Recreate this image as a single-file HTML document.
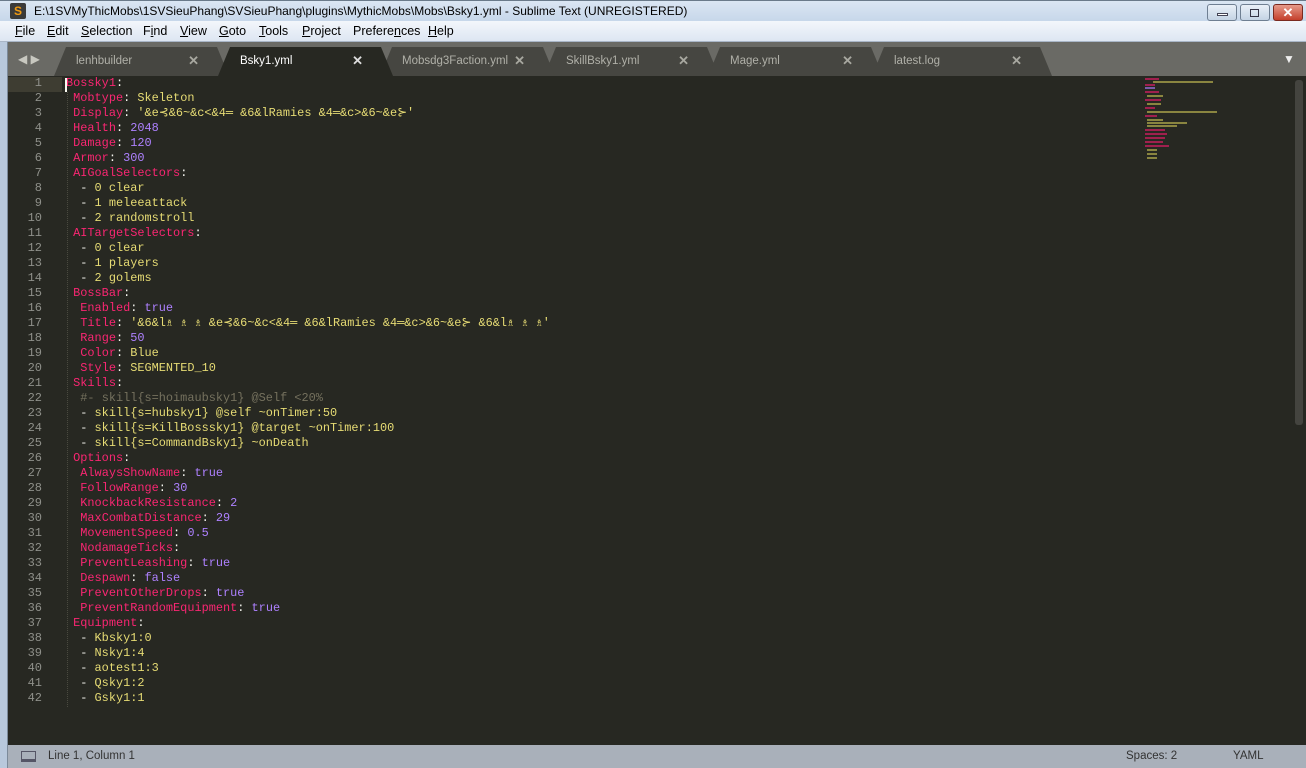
<!DOCTYPE html>
<html><head><meta charset="utf-8"><style>
*{margin:0;padding:0;box-sizing:border-box}
body{width:1306px;height:768px;overflow:hidden;background:#272822;position:relative;font-family:"Liberation Sans",sans-serif}
#title{position:absolute;left:0;top:0;width:1306px;height:21px;background:linear-gradient(#dbe6f3,#c7d7ea);border-top:1px solid #6a7a8a}
#title .t{position:absolute;left:34px;top:3px;font-size:12px;color:#000}
#icon{position:absolute;left:10px;top:2px;width:16px;height:16px;background:#3a3a3a;border-radius:2px;color:#f39c12;font-weight:bold;font-size:12px;text-align:center;line-height:16px}
.wb{position:absolute;top:3px;height:17px;border:1px solid #6f7f92;border-radius:3px;background:linear-gradient(#e9f0f8,#c4d3e4)}
#menu{position:absolute;left:0;top:21px;width:1306px;height:21px;background:linear-gradient(#f3f6fb,#dde6f2);border-bottom:1px solid #a9b6c7}
#menu span{position:absolute;top:3px;font-size:12.5px;color:#000}
#leftedge{position:absolute;left:0;top:42px;width:8px;height:726px;background:#b8c8dc;border-right:1px solid #7c8a9a}
#tabs{position:absolute;left:8px;top:42px;width:1298px;height:34px;background:#6a6a65}
.tab{position:absolute;top:5px;height:29px;background:#464641;clip-path:polygon(0 100%,12px 0,calc(100% - 12px) 0,100% 100%)}
.tab.a{background:#272822}
.tab span{position:absolute;top:8px;left:22px;font-size:11.5px;color:#b0b0a8}
.tab.a span{color:#fff}
.tab i{position:absolute;top:6px;right:30px;font-style:normal;font-size:13px;color:#a8a8a0;font-weight:bold}
#gut{position:absolute;left:8px;top:76px;width:34px;font-family:"Liberation Mono",monospace;font-size:12px;line-height:15px;color:#8f908a;text-align:right}
#hl{position:absolute;left:8px;top:77px;width:54px;height:15px;background:#3e3d32}
#code{position:absolute;left:66px;top:76px;font-family:"Liberation Mono","DejaVu Sans Mono",monospace;font-size:11.9px;line-height:15px;color:#f8f8f2;white-space:pre}
#guide{position:absolute;left:67px;top:92px;height:615px;border-left:1px dotted #4a4a40}
.k{color:#f92672}.s{color:#e6db74}.n{color:#ae81ff}.c{color:#75715e}
#caret{position:absolute;left:65px;top:78px;width:2px;height:14px;background:#f8f8f0}
#status{position:absolute;left:8px;top:745px;width:1298px;height:23px;background:#a9b0ba;font-size:11.5px;color:#333}
#status span{position:absolute;top:5px}
#scroll{position:absolute;left:1295px;top:80px;width:8px;height:345px;background:#44443f;border-radius:3px}
#mini{position:absolute;left:1145px;top:78px;width:80px;height:90px}
#mini div{position:absolute;height:2px}
</style></head><body>
<div id="title"><div id="icon">S</div><div class="t">E:\1SVMyThicMobs\1SVSieuPhang\SVSieuPhang\plugins\MythicMobs\Mobs\Bsky1.yml - Sublime Text (UNREGISTERED)</div>
<div class="wb" style="left:1207px;width:30px"><div style="position:absolute;left:9px;top:8px;width:11px;height:3px;background:#fff;border:1px solid #445"></div></div>
<div class="wb" style="left:1240px;width:30px"><div style="position:absolute;left:9px;top:4px;width:9px;height:8px;border:1px solid #334"></div></div>
<div class="wb" style="left:1273px;width:30px;background:linear-gradient(#e69a8a,#c4402c);border-color:#7a2a20;color:#fff;text-align:center;font-weight:bold;font-size:13px;line-height:15px">✕</div></div>
<div id="menu"><span style="left:15px"><u>F</u>ile</span><span style="left:47px"><u>E</u>dit</span><span style="left:81px"><u>S</u>election</span><span style="left:143px">F<u>i</u>nd</span><span style="left:180px"><u>V</u>iew</span><span style="left:219px"><u>G</u>oto</span><span style="left:259px"><u>T</u>ools</span><span style="left:302px"><u>P</u>roject</span><span style="left:353px">Prefere<u>n</u>ces</span><span style="left:428px"><u>H</u>elp</span></div>
<div id="leftedge"></div>
<div id="tabs">
<div style="position:absolute;left:10px;top:10px;color:#c8c8c0;font-size:12px">◀ ▶</div>
<div class="tab" style="left:46px;width:175px"><span>lenhbuilder</span><i>✕</i></div>
<div class="tab" style="left:536px;width:175px"><span>SkillBsky1.yml</span><i>✕</i></div>
<div class="tab" style="left:700px;width:175px"><span>Mage.yml</span><i>✕</i></div>
<div class="tab" style="left:864px;width:180px"><span>latest.log</span><i>✕</i></div>
<div class="tab" style="left:372px;width:175px"><span>Mobsdg3Faction.yml</span><i>✕</i></div>
<div class="tab a" style="left:210px;width:175px"><span>Bsky1.yml</span><i style="color:#ddd">✕</i></div>
<div style="position:absolute;left:1275px;top:10px;color:#eee;font-size:12px">▼</div>
</div>
<div id="hl"></div>
<div id="gut">1<br>2<br>3<br>4<br>5<br>6<br>7<br>8<br>9<br>10<br>11<br>12<br>13<br>14<br>15<br>16<br>17<br>18<br>19<br>20<br>21<br>22<br>23<br>24<br>25<br>26<br>27<br>28<br>29<br>30<br>31<br>32<br>33<br>34<br>35<br>36<br>37<br>38<br>39<br>40<br>41<br>42</div>
<div id="guide"></div>
<div id="code"><span class="k">Bossky1</span>:
 <span class="k">Mobtype</span>: <span class="s">Skeleton</span>
 <span class="k">Display</span>: <span class="s">'&amp;e⊰&amp;6~&amp;c&lt;&amp;4═ &amp;6&amp;lRamies &amp;4═&amp;c&gt;&amp;6~&amp;e⊱'</span>
 <span class="k">Health</span>: <span class="n">2048</span>
 <span class="k">Damage</span>: <span class="n">120</span>
 <span class="k">Armor</span>: <span class="n">300</span>
 <span class="k">AIGoalSelectors</span>:
  - <span class="s">0 clear</span>
  - <span class="s">1 meleeattack</span>
  - <span class="s">2 randomstroll</span>
 <span class="k">AITargetSelectors</span>:
  - <span class="s">0 clear</span>
  - <span class="s">1 players</span>
  - <span class="s">2 golems</span>
 <span class="k">BossBar</span>:
  <span class="k">Enabled</span>: <span class="n">true</span>
  <span class="k">Title</span>: <span class="s">'&amp;6&amp;l♗ ♗ ♗ &amp;e⊰&amp;6~&amp;c&lt;&amp;4═ &amp;6&amp;lRamies &amp;4═&amp;c&gt;&amp;6~&amp;e⊱ &amp;6&amp;l♗ ♗ ♗'</span>
  <span class="k">Range</span>: <span class="n">50</span>
  <span class="k">Color</span>: <span class="s">Blue</span>
  <span class="k">Style</span>: <span class="s">SEGMENTED_10</span>
 <span class="k">Skills</span>:
  <span class="c">#- skill{s=hoimaubsky1} @Self &lt;20%</span>
  - <span class="s">skill{s=hubsky1} @self ~onTimer:50</span>
  - <span class="s">skill{s=KillBosssky1} @target ~onTimer:100</span>
  - <span class="s">skill{s=CommandBsky1} ~onDeath</span>
 <span class="k">Options</span>:
  <span class="k">AlwaysShowName</span>: <span class="n">true</span>
  <span class="k">FollowRange</span>: <span class="n">30</span>
  <span class="k">KnockbackResistance</span>: <span class="n">2</span>
  <span class="k">MaxCombatDistance</span>: <span class="n">29</span>
  <span class="k">MovementSpeed</span>: <span class="n">0.5</span>
  <span class="k">NodamageTicks</span>:
  <span class="k">PreventLeashing</span>: <span class="n">true</span>
  <span class="k">Despawn</span>: <span class="n">false</span>
  <span class="k">PreventOtherDrops</span>: <span class="n">true</span>
  <span class="k">PreventRandomEquipment</span>: <span class="n">true</span>
 <span class="k">Equipment</span>:
  - <span class="s">Kbsky1:0</span>
  - <span class="s">Nsky1:4</span>
  - <span class="s">aotest1:3</span>
  - <span class="s">Qsky1:2</span>
  - <span class="s">Gsky1:1</span></div>
<div id="caret"></div>
<div id="mini">
<div style="left:0;top:0;width:14px;background:#a0204e"></div><div style="top:3px;width:60px;background:#8a8540;left:8px"></div>
<div style="left:0;top:6px;width:10px;background:#a0204e"></div><div style="left:0;top:9px;width:10px;background:#7a5aaa"></div>
<div style="left:0;top:13px;width:14px;background:#a0204e"></div><div style="left:2px;top:17px;width:16px;background:#8a8540"></div>
<div style="left:0;top:21px;width:16px;background:#a0204e"></div><div style="left:2px;top:25px;width:14px;background:#8a8540"></div>
<div style="left:0;top:29px;width:10px;background:#a0204e"></div><div style="left:2px;top:33px;width:70px;background:#8a8540"></div>
<div style="left:0;top:37px;width:12px;background:#a0204e"></div><div style="left:2px;top:41px;width:16px;background:#8a8540"></div>
<div style="left:2px;top:44px;width:40px;background:#8a8540"></div><div style="left:2px;top:47px;width:30px;background:#8a8540"></div>
<div style="left:0;top:51px;width:20px;background:#a0204e"></div><div style="left:0;top:55px;width:22px;background:#a0204e"></div>
<div style="left:0;top:59px;width:20px;background:#a0204e"></div><div style="left:0;top:63px;width:18px;background:#a0204e"></div>
<div style="left:0;top:67px;width:24px;background:#a0204e"></div><div style="left:2px;top:71px;width:10px;background:#8a8540"></div>
<div style="left:2px;top:75px;width:10px;background:#8a8540"></div><div style="left:2px;top:79px;width:10px;background:#8a8540"></div>
</div>
<div id="scroll"></div>
<div id="status"><div style="position:absolute;left:13px;top:6px;width:15px;height:11px;border:1px solid #556;border-bottom:3px solid #556"></div><span style="left:40px">Line 1, Column 1</span><span style="left:1118px">Spaces: 2</span><span style="left:1225px">YAML</span></div>
</body></html>
